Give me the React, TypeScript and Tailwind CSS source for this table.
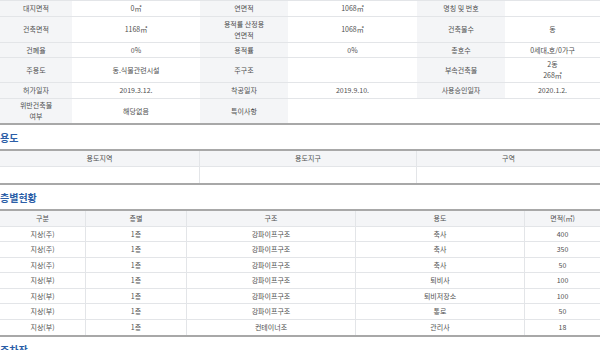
const font = { fontFamily: '"Noto Sans CJK KR", "Noto Sans", sans-serif' }

const floors = [
  ['지상(주)', '1층', '강파이프구조', '축사', '400'],
  ['지상(주)', '1층', '강파이프구조', '축사', '350'],
  ['지상(주)', '1층', '강파이프구조', '축사', '50'],
  ['지상(부)', '1층', '강파이프구조', '퇴비사', '100'],
  ['지상(부)', '1층', '강파이프구조', '퇴비저장소', '100'],
  ['지상(부)', '1층', '강파이프구조', '통로', '50'],
  ['지상(부)', '1층', '컨테이너조', '관리사', '18'],
]

function L({ children, last }: { children?: React.ReactNode; last?: boolean }) {
  return (
    <div
      className={`flex items-center justify-center text-center bg-[#f4f5f7] border-[#e3e5e8] leading-[11px] ${last ? '' : 'border-b'}`}
    >
      {children}
    </div>
  )
}

function V({ children, last, span }: { children?: React.ReactNode; last?: boolean; span?: boolean }) {
  return (
    <div
      className={`flex items-center justify-center text-center bg-white border-[#e3e5e8] leading-[11px] ${last ? '' : 'border-b'} ${span ? 'col-span-3' : ''}`}
    >
      {children}
    </div>
  )
}

function Heading({ children }: { children: React.ReactNode }) {
  return <h2 className="h-[24px] flex items-center text-[10px] font-bold text-[#2b5ea7]">{children}</h2>
}

export default function App() {
  return (
    <div className="w-[600px] h-[350px] overflow-hidden bg-white text-[7px] text-[#505050]" style={font}>
      {/* 건축물 개요 */}
      <div className="border-t border-[#e3e5e8] border-b-2 border-b-[#a8a8a8]">
        <div className="grid grid-cols-[72px_128px_88px_129px_88px_95px] grid-rows-[16px_26px_15px_25px_16px_24px]">
          <L>대지면적</L>
          <V>0㎡</V>
          <L>연면적</L>
          <V>1068㎡</V>
          <L>명칭 및 번호</L>
          <V />

          <L>건축면적</L>
          <V>1168㎡</V>
          <L>
            용적률 산정용
            <br />
            연면적
          </L>
          <V>1068㎡</V>
          <L>건축물수</L>
          <V>동</V>

          <L>건폐율</L>
          <V>0%</V>
          <L>용적률</L>
          <V>0%</V>
          <L>총호수</L>
          <V>0세대,호/0가구</V>

          <L>주용도</L>
          <V>동.식물관련시설</V>
          <L>주구조</L>
          <V />
          <L>부속건축물</L>
          <V>
            2동
            <br />
            268㎡
          </V>

          <L>허가일자</L>
          <V>2019.3.12.</V>
          <L>착공일자</L>
          <V>2019.9.10.</V>
          <L>사용승인일자</L>
          <V>2020.1.2.</V>

          <L last>
            위반건축물
            <br />
            여부
          </L>
          <V last>해당없음</V>
          <L last>특이사항</L>
          <V last span />
        </div>
      </div>

      {/* 용도 */}
      <Heading>용도</Heading>
      <div className="border-t-2 border-[#a8a8a8] border-b-2">
        <div className="grid grid-cols-[200px_217px_183px] grid-rows-[16px_16px]">
          {['용도지역', '용도지구', '구역'].map((h, i) => (
            <div
              key={h}
              className={`flex items-center justify-center bg-[#f4f5f7] border-b border-[#e3e5e8] ${i < 2 ? 'border-r' : ''}`}
            >
              {h}
            </div>
          ))}
          {[0, 1, 2].map((i) => (
            <div key={i} className={`bg-white border-[#e3e5e8] ${i < 2 ? 'border-r' : ''}`} />
          ))}
        </div>
      </div>

      {/* 층별현황 */}
      <Heading>층별현황</Heading>
      <div className="border-t-2 border-[#a8a8a8] border-b-2">
        <div className="grid grid-cols-[86px_101px_169px_169px_75px] auto-rows-[15.5px]">
          {['구분', '층별', '구조', '용도', '면적(㎡)'].map((h, i) => (
            <div
              key={h}
              className={`flex items-center justify-center h-[16px] bg-[#f4f5f7] border-b border-[#e3e5e8] ${i < 4 ? 'border-r' : ''}`}
            >
              {h}
            </div>
          ))}
          {floors.map((row, r) =>
            row.map((c, i) => (
              <div
                key={`${r}-${i}`}
                className={`flex items-center justify-center bg-white border-[#e3e5e8] ${i < 4 ? 'border-r' : ''} ${r < floors.length - 1 ? 'border-b' : ''}`}
              >
                {c}
              </div>
            ))
          )}
        </div>
      </div>

      <Heading>주차장</Heading>
    </div>
  )
}
